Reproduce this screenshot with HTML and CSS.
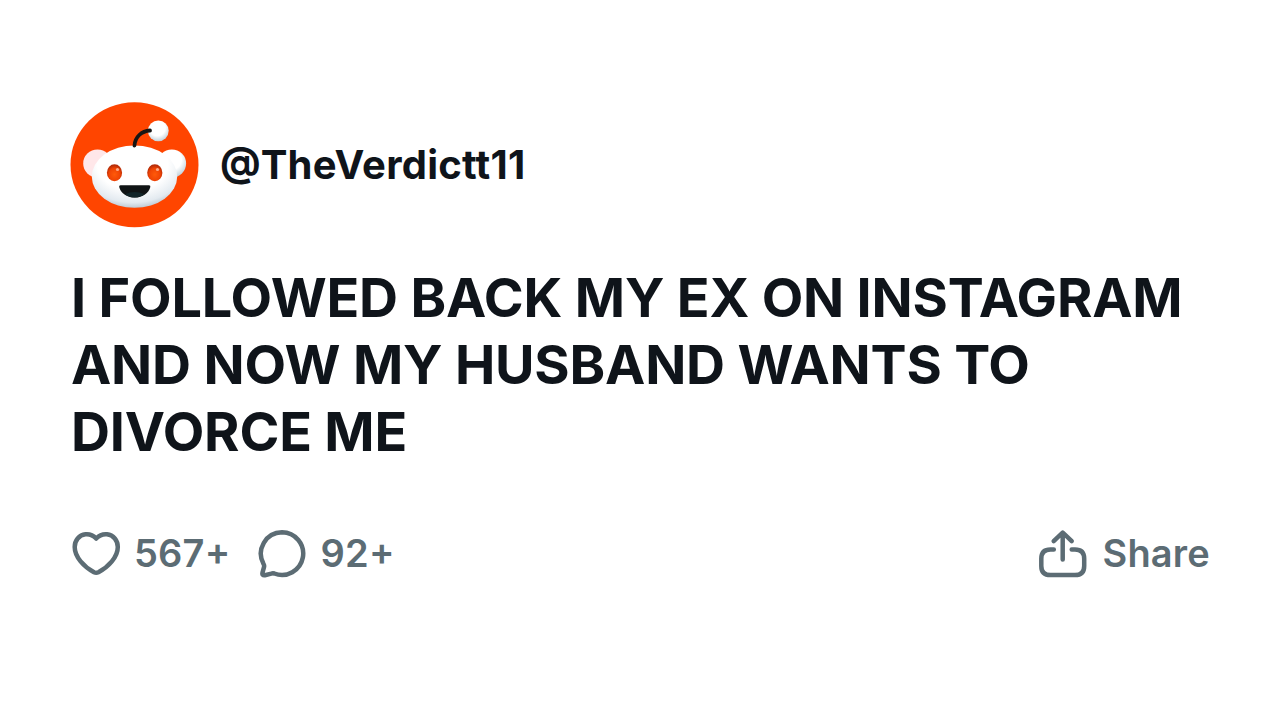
FILE: index.html
```html
<!DOCTYPE html>
<html lang="en">
    <head>
        <meta charset="UTF-8">
        <meta name="viewport" content="width=device-width, initial-scale=1.0">
        <title>TheVerdictt11</title>
        <link rel="stylesheet" href="styles.css">
    </head>
    <body>
        <main class="post">
            <header class="author">
                <svg class="avatar" viewBox="70 102 129 126">
                    <defs>
                        <radialGradient id="head" cx="0.48" cy="0.3" r="0.75">
                            <stop offset="0.55" stop-color="#ffffff"/>
                            <stop offset="0.82" stop-color="#e3eaf0"/>
                            <stop offset="1" stop-color="#a9b9c5"/>
                        </radialGradient>
                        <radialGradient id="ball" cx="0.45" cy="0.35" r="0.65">
                            <stop offset="0.6" stop-color="#ffffff"/>
                            <stop offset="1" stop-color="#c3d3dc"/>
                        </radialGradient>
                        <radialGradient id="eye" cx="0.5" cy="0.6" r="0.55">
                            <stop offset="0" stop-color="#ff5a0a"/>
                            <stop offset="0.65" stop-color="#f04404"/>
                            <stop offset="1" stop-color="#b52c08"/>
                        </radialGradient>
                    </defs>
                    <ellipse cx="134.5" cy="164.7" rx="64" ry="62.5" fill="#ff4500"/>
                    <ellipse cx="97.5" cy="163.5" rx="14.3" ry="14" fill="#ffe7e9"/>
                    <ellipse cx="171.8" cy="163.5" rx="14.3" ry="14" fill="url(#ball)"/>
                    <ellipse cx="134.5" cy="176.6" rx="42.7" ry="31.2" fill="url(#head)"/>
                    <circle cx="158.3" cy="130.8" r="10.4" fill="url(#ball)"/>
                    <path d="M134.5 145.5c.5-8.5 7-14.5 15.5-15" fill="none" stroke="#171513" stroke-width="3.8" stroke-linecap="round"/>
                    <ellipse cx="114.5" cy="172.8" rx="7.6" ry="8.5" fill="url(#eye)"/>
                    <ellipse cx="154.8" cy="172.8" rx="7.6" ry="8.5" fill="url(#eye)"/>
                    <circle cx="117.5" cy="169.5" r="1.6" fill="#ffad8a"/>
                    <circle cx="157.5" cy="169.5" r="1.6" fill="#ffad8a"/>
                    <path d="M120.5 185.2h28.5q1.7 0 1.3 1.7c-1.5 6-7.5 10.6-15.6 10.6s-14-4.6-15.5-10.6q-.4-1.7 1.3-1.7z" fill="#101415"/>
                    <path d="M125 194.3q9.7-4.5 19.4 0c-5.5 4.2-14 4.2-19.4 0z" fill="#122529"/>
                </svg>
                <span class="username"><span class="at">@</span>TheVerdictt11</span>
            </header>

            <h1 class="title">I FOLLOWED BACK MY EX ON INSTAGRAM AND NOW MY HUSBAND WANTS TO DIVORCE ME</h1>

            <footer class="actions">
                <div class="action likes">
                    <svg class="icon" viewBox="70 527 52 52">
                        <path d="M96.2 538.5C92.5 534.5 88.5 534 85.5 534.3C79 535 74.7 540.5 74.7 547C74.7 557 84 566.8 94 572.2Q96.2 573.3 98.4 572.2C108.5 566.8 117.8 557 117.8 547C117.8 540.5 113.5 535 107 534.3C104 534 100 534.5 96.2 538.5z"/>
                    </svg>
                    <span class="count">567<span class="plus">+</span></span>
                </div>
                <div class="action comments">
                    <svg class="icon" viewBox="256 527 52 52">
                        <path d="M282 532.3a21.3 21.3 0 1 1-7.7 41.2q-1.5-.5-3 .1l-6.5 1.6q-3 .4-2.3-2.5l1.5-5.5q.5-1.7-.5-3.4A21.3 21.3 0 0 1 282 532.3z"/>
                    </svg>
                    <span class="count">92<span class="plus">+</span></span>
                </div>
                <div class="action share">
                    <svg class="icon" viewBox="1036 527 52 52">
                        <path d="M1053.8 549.5h-3.3q-9.2 0-9.2 9.2v7.2q0 9.2 9.2 9.2h24.5q9.2 0 9.2-9.2v-7.2q0-9.2-9.2-9.2h-3.3M1062.7 559.5v-26.5M1053.7 541.2l9-8.7l9 8.7"/>
                    </svg>
                    <span class="count">Share</span>
                </div>
            </footer>
        </main>
    </body>
</html>
```
FILE: styles.css
```css
*,*::before,*::after{
    padding: 0;
    margin: 0;
    box-sizing: border-box;
}
body{
    background-color: #ffffff;
    font-family: "Inter", "Liberation Sans", sans-serif;
    color: #0f141a;
}
.post{
    height: 720px;
    padding: 102px 70px 0;
}
.author{
    display: flex;
    align-items: center;
    gap: 21px;
    height: 126px;
}
.avatar{
    width: 129px;
    height: 126px;
}
.username{
    padding-bottom: 2px;
    font-size: 40px;
    font-weight: 700;
    letter-spacing: 0.25px;
}
.at{
    line-height: 0;
    vertical-align: 3px;
    letter-spacing: 0;
}
.title{
    margin-top: 36px;
    padding-left: 1px;
    font-size: 54px;
    font-weight: 700;
    line-height: 67px;
    letter-spacing: -0.2px;
}
.actions{
    display: flex;
    align-items: center;
    margin-top: 62px;
    height: 52px;
    color: #5c6c74;
}
.action{
    display: flex;
    align-items: center;
    gap: 12px;
    font-size: 38px;
    font-weight: 600;
    letter-spacing: 0.2px;
}
.count{
    padding-bottom: 1px;
}
.plus{
    line-height: 0;
    vertical-align: 2px;
}
.comments{
    margin-left: 26px;
}
.share{
    margin-left: auto;
}
.share .icon{
    margin-right: 2px;
}
.icon{
    width: 52px;
    height: 52px;
    fill: none;
    stroke: currentColor;
    stroke-width: 4.5;
    stroke-linecap: round;
    stroke-linejoin: round;
}
```
